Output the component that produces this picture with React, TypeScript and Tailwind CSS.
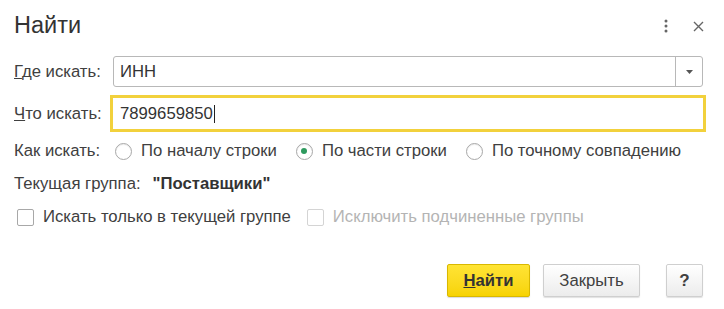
import React, { useState } from 'react';

const font = { fontFamily: '"Liberation Sans", Arial, sans-serif' };

const Radio: React.FC<{ checked?: boolean; label: string; onClick: () => void }> = ({ checked, label, onClick }) => (
    <button onClick={onClick} className="flex items-center gap-[9px] text-[16.7px] text-[#404040]">
        <span className="w-[17px] h-[17px] rounded-full border border-[#a8a8a8] bg-white flex items-center justify-center shadow-[inset_0_1px_1px_rgba(0,0,0,0.08)]">
            {checked && <span className="w-[6px] h-[6px] rounded-full bg-[#2e9a5e]" />}
        </span>
        <span>{label}</span>
    </button>
);

const Checkbox: React.FC<{ label: string; disabled?: boolean }> = ({ label, disabled }) => (
    <label className={`flex items-center gap-[9px] text-[16.7px] ${disabled ? 'text-[#b4b4b4]' : 'text-[#404040]'}`}>
        <span className={`w-[17px] h-[17px] rounded-[2px] border bg-white ${disabled ? 'border-[#d4d4d4]' : 'border-[#a8a8a8]'}`} />
        <span>{label}</span>
    </label>
);

const App: React.FC = () => {
    const [mode, setMode] = useState(1);

    return (
        <div className="w-[724px] h-[309px] bg-white flex flex-col" style={font}>
            {/* Header */}
            <div className="h-[52px] flex items-center justify-between pl-[14px] pr-[20px]">
                <h1 className="text-[23.5px] text-[#333] leading-none">Найти</h1>
                <div className="flex items-center gap-[25px]">
                    <svg width="4" height="14" viewBox="0 0 4 14">
                        <circle cx="2" cy="2" r="1.5" fill="#666" />
                        <circle cx="2" cy="7" r="1.5" fill="#666" />
                        <circle cx="2" cy="12" r="1.5" fill="#666" />
                    </svg>
                    <svg width="11" height="11" viewBox="0 0 11 11">
                        <path d="M1 1 L10 10 M10 1 L1 10" stroke="#666" strokeWidth="1.4" />
                    </svg>
                </div>
            </div>

            {/* Где искать */}
            <div className="mt-[4px] flex items-center h-[31px] pl-[14px] pr-[21px]">
                <span className="w-[99px] text-[16.7px] text-[#404040]"><u>Г</u>де искать:</span>
                <div className="flex-1 h-full flex border border-[#b8b8b8] rounded-[3px] bg-white">
                    <div className="flex-1 flex items-center pl-[6px] text-[16.7px] text-[#333]">ИНН</div>
                    <div className="w-[27px] border-l border-[#b8b8b8] flex items-center justify-center">
                        <svg width="7" height="4" viewBox="0 0 7 4"><path d="M0 0 H7 L3.5 4 Z" fill="#555" /></svg>
                    </div>
                </div>
            </div>

            {/* Что искать */}
            <div className="mt-[8px] flex items-center h-[37px] pl-[14px] pr-[18px]">
                <span className="w-[96px] text-[16.7px] text-[#404040]"><u>Ч</u>то искать:</span>
                <div className="flex-1 h-full border-[3px] border-[#f2d13c] flex items-center pl-[7px] text-[16.7px] text-[#333]">
                    7899659850<span className="w-px h-[18px] bg-[#222] ml-[1px]" />
                </div>
            </div>

            {/* Как искать */}
            <div className="mt-[7px] flex items-center h-[24px] pl-[14px]">
                <span className="w-[101px] text-[16.7px] text-[#404040]">Как искать:</span>
                <div className="flex items-center gap-[19px]">
                    <Radio label="По началу строки" checked={mode === 0} onClick={() => setMode(0)} />
                    <Radio label="По части строки" checked={mode === 1} onClick={() => setMode(1)} />
                    <Radio label="По точному совпадению" checked={mode === 2} onClick={() => setMode(2)} />
                </div>
            </div>

            {/* Текущая группа */}
            <div className="mt-[9px] flex items-center h-[24px] pl-[14px] text-[16.7px]">
                <span className="text-[#404040]">Текущая группа:</span>
                <span className="ml-[12px] font-bold text-[#333]">"Поставщики"</span>
            </div>

            {/* Checkboxes */}
            <div className="mt-[9px] flex items-center h-[24px] pl-[17px] gap-[16px]">
                <Checkbox label="Искать только в текущей группе" />
                <Checkbox label="Исключить подчиненные группы" disabled />
            </div>

            {/* Buttons */}
            <div className="mt-[35px] flex items-center justify-end h-[33px] pr-[21px]">
                <button className="w-[83px] h-full rounded-[2px] border border-[#d9b800] bg-gradient-to-b from-[#ffe433] to-[#f7d300] text-[16.7px] font-bold text-[#333] shadow-[0_1px_1px_rgba(0,0,0,0.15)]">
                    <u>Н</u>айти
                </button>
                <button className="ml-[13px] w-[97px] h-full rounded-[2px] border border-[#cfcfcf] bg-gradient-to-b from-white to-[#ececec] text-[16.7px] text-[#404040] shadow-[0_1px_1px_rgba(0,0,0,0.12)]">
                    Закрыть
                </button>
                <button className="ml-[26px] w-[37px] h-full rounded-[2px] border border-[#cfcfcf] bg-gradient-to-b from-white to-[#ececec] text-[17px] font-bold text-[#404040] shadow-[0_1px_1px_rgba(0,0,0,0.12)]">
                    ?
                </button>
            </div>
        </div>
    );
};

export default App;
